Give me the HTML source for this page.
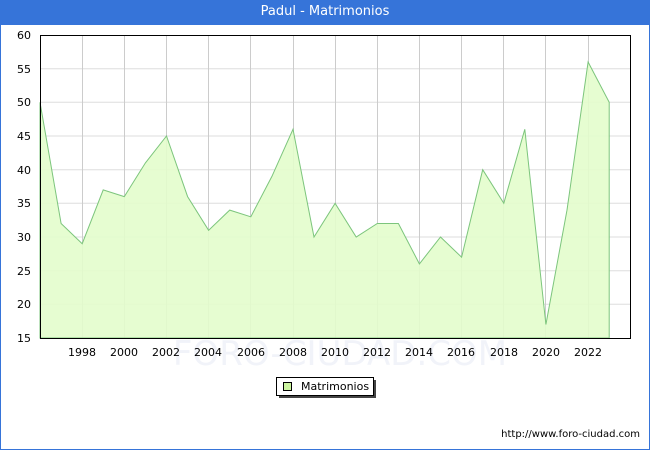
<!DOCTYPE html>
<html><head><meta charset="utf-8"><style>
html,body{margin:0;padding:0;background:#fff}
body{width:650px;height:450px;position:relative;overflow:hidden;font-family:"DejaVu Sans","Liberation Sans",sans-serif}
.frame{position:absolute;left:0;top:0;width:648px;height:448px;border:1px solid #3674d9}
.title{position:absolute;left:0;top:0;width:650px;height:25px;background:#3674d9;color:#fff;font-size:13px;text-align:center;line-height:24px}
</style></head><body>
<div class="frame"></div>
<div class="title">Padul - Matrimonios</div>
<svg width="650" height="450" style="position:absolute;left:0;top:0" font-family="DejaVu Sans, Liberation Sans, sans-serif" font-size="11">
<text x="340" y="365" font-size="34" fill="#f1f3f9" text-anchor="middle">FORO-CIUDAD.COM</text>
<g stroke="#dddddd" stroke-width="1">
<line x1="40" x2="630" y1="68.7" y2="68.7"/><line x1="40" x2="630" y1="102.3" y2="102.3"/><line x1="40" x2="630" y1="136" y2="136"/><line x1="40" x2="630" y1="169.7" y2="169.7"/><line x1="40" x2="630" y1="203.3" y2="203.3"/><line x1="40" x2="630" y1="237" y2="237"/><line x1="40" x2="630" y1="270.7" y2="270.7"/><line x1="40" x2="630" y1="304.3" y2="304.3"/>
</g>
<g stroke="#cccccc">
<line x1="82.5" x2="82.5" y1="35" y2="338"/><line x1="124.5" x2="124.5" y1="35" y2="338"/><line x1="166.5" x2="166.5" y1="35" y2="338"/><line x1="208.5" x2="208.5" y1="35" y2="338"/><line x1="250.5" x2="250.5" y1="35" y2="338"/><line x1="293.5" x2="293.5" y1="35" y2="338"/><line x1="335.5" x2="335.5" y1="35" y2="338"/><line x1="377.5" x2="377.5" y1="35" y2="338"/><line x1="419.5" x2="419.5" y1="35" y2="338"/><line x1="461.5" x2="461.5" y1="35" y2="338"/><line x1="503.5" x2="503.5" y1="35" y2="338"/><line x1="545.5" x2="545.5" y1="35" y2="338"/><line x1="588.5" x2="588.5" y1="35" y2="338"/>
</g>
<polygon fill="#e3fdcc" fill-opacity="0.9" stroke="#7cc57c" stroke-width="1" points="40,338 40,102.3 61.1,223.5 82.2,243.7 103.2,189.9 124.3,196.6 145.4,162.9 166.5,136 187.6,196.6 208.6,230.3 229.7,210.1 250.8,216.8 271.9,176.4 293,129.3 314,237 335.1,203.3 356.2,237 377.3,223.5 398.4,223.5 419.4,263.9 440.5,237 461.6,257.2 482.7,169.7 503.8,203.3 524.8,129.3 545.9,324.5 567,210.1 588.1,62 609.2,102.3 609.2,338"/>
<rect x="40.5" y="35.5" width="590" height="303" fill="none" stroke="#000"/>
<g fill="#000" text-anchor="end">
<text x="31" y="39">60</text><text x="31" y="73">55</text><text x="31" y="106">50</text><text x="31" y="140">45</text><text x="31" y="174">40</text><text x="31" y="207">35</text><text x="31" y="241">30</text><text x="31" y="275">25</text><text x="31" y="308">20</text><text x="31" y="342">15</text>
</g>
<g fill="#000" text-anchor="middle">
<text x="82" y="356">1998</text><text x="124" y="356">2000</text><text x="166" y="356">2002</text><text x="208" y="356">2004</text><text x="251" y="356">2006</text><text x="293" y="356">2008</text><text x="335" y="356">2010</text><text x="377" y="356">2012</text><text x="419" y="356">2014</text><text x="461" y="356">2016</text><text x="504" y="356">2018</text><text x="546" y="356">2020</text><text x="588" y="356">2022</text>
</g>
<rect x="279" y="380" width="97" height="18" fill="#444"/>
<rect x="276.5" y="377.5" width="97" height="18" fill="#fff" stroke="#000"/>
<rect x="283.5" y="382.5" width="8" height="8" fill="#ccf5a0" stroke="#000"/>
<text x="301" y="390" font-size="11">Matrimonios</text>
<text x="640" y="437" text-anchor="end" font-size="10">http://www.foro-ciudad.com</text>
</svg>
</body></html>
